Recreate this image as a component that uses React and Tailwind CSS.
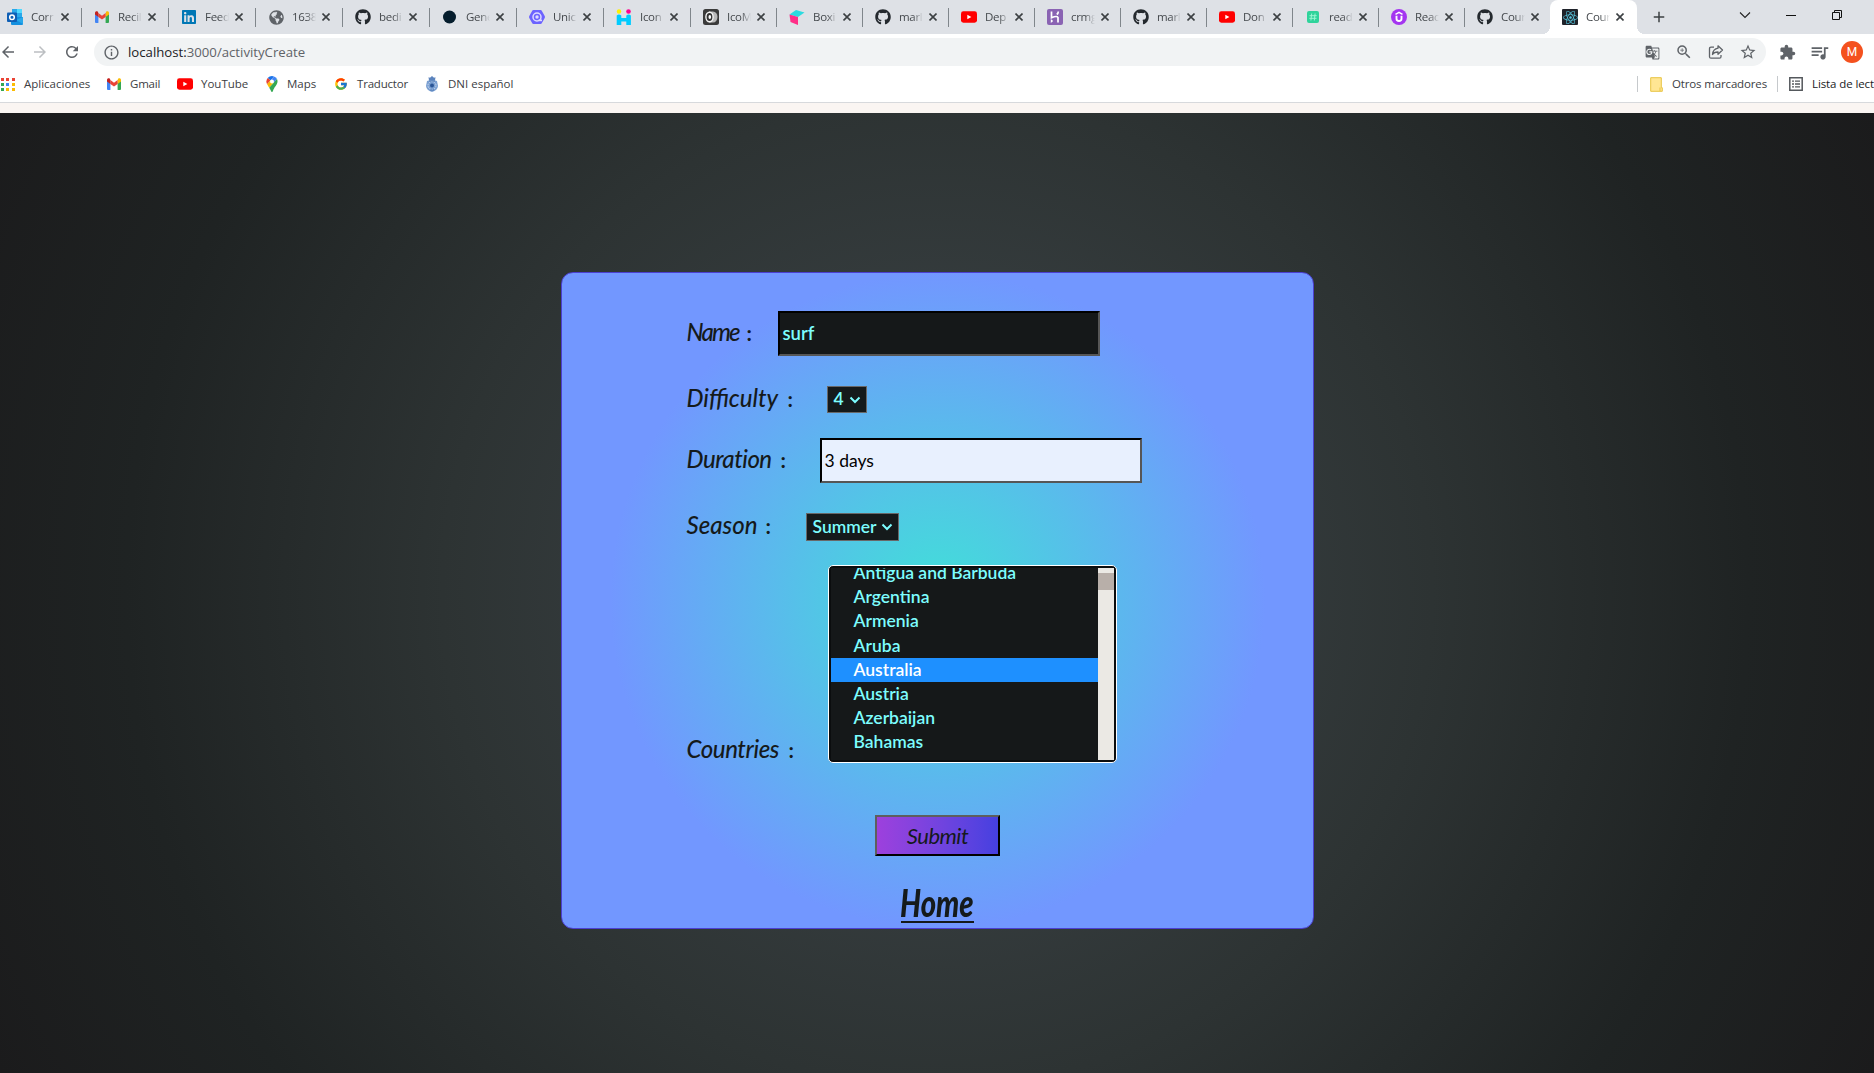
import React from "react";
import { FaGithub, FaLinkedin, FaGlobeAmericas, FaReact } from "react-icons/fa";
import { FcGoogle } from "react-icons/fc";
import {
  MdArrowBack,
  MdArrowForward,
  MdRefresh,
  MdInfoOutline,
  MdGTranslate,
  MdStarBorder,
  MdExtension,
  MdQueueMusic,
  MdAdd,
  MdZoomIn,
} from "react-icons/md";

const Outlook = () => (
  <svg viewBox="0 0 16 16" className="size-4">
    <path d="M5 0h10v9H5z" fill="#28a8ea" />
    <path d="M10 0h5v4h-5z" fill="#50d9ff" />
    <path d="M5 4h5v4H5z" fill="#0364b8" />
    <path d="M4 8h12v7a1 1 0 0 1-1 1H5a1 1 0 0 1-1-1z" fill="#1490df" />
    <path d="M16 8v7L9 11z" fill="#28a8ea" />
    <rect y="3.5" width="10" height="9.5" rx="1" fill="#0f5fb5" />
    <circle cx="5" cy="8.2" r="2.3" fill="none" stroke="#fff" strokeWidth="1.5" />
  </svg>
);

const Gmail = ({ className = "h-4 w-4" }) => (
  <svg viewBox="0 0 16 16" className={className}>
    <path d="M1 4v9a1 1 0 0 0 1 1h2.4V6.5z" fill="#4285f4" />
    <path d="M15 4v9a1 1 0 0 1-1 1h-2.4V6.5z" fill="#34a853" />
    <path d="M11.6 4v3.9L15 5.4V4c0-1.6-1.6-2.3-2.7-1.4z" fill="#fbbc04" />
    <path d="M4.4 7.9V4L8 6.700 11.6 4v3.9L8 10.6z" fill="#ea4335" />
    <path d="M1 4v1.4l3.4 2.5V4l-.7-1.4C2.6 1.7 1 2.4 1 4z" fill="#c5221f" />
  </svg>
);

const YouTube = ({ className = "size-4" }) => (
  <svg viewBox="0 0 16 16" className={className}>
    <rect y="2.3" width="16" height="11.4" rx="2.4" fill="#f00" />
    <path d="M6.3 5.7v4.6L10.4 8z" fill="#fff" />
  </svg>
);

const Dot = () => (
  <svg viewBox="0 0 16 16" className="size-4">
    <circle cx="7.5" cy="8" r="6.5" fill="#051d2d" />
  </svg>
);

const Unicons = () => (
  <svg viewBox="0 0 16 16" className="size-4">
    <path d="M4.500 1h7q1 0 1.400.9L15.700 7q.5 1 0 2l-2.800 5.100q-.4.900-1.400.9h-7q-1 0-1.400-.9L.3 9q-.5-1 0-2l2.800-5.100Q3.500 1 4.500 1z" fill="#6c63ff" />
    <circle cx="8" cy="8" r="4" fill="none" stroke="#dedcff" strokeWidth="1.5" />
    <circle cx="8" cy="8" r="1.7" fill="#dedcff" />
    <path d="M9.500 10.500h3.500v1.700H9.500z" fill="#dedcff" />
  </svg>
);

const Iconify = () => (
  <svg viewBox="0 0 16 16" className="size-4">
    <circle cx="3" cy="2.5" r="2.2" fill="#fff200" />
    <circle cx="12.5" cy="2.5" r="2.3" fill="#ff0090" />
    <path d="M.7 6.500q2.300-1.800 4.600 0V9h5V6.500q2.300-1.800 4.600 0V16h-4.600v-3.500h-5V16H.7z" fill="#0cf" />
  </svg>
);

const IcoMoon = () => (
  <svg viewBox="0 0 16 16" className="size-4">
    <rect width="16" height="16" rx="2.5" fill="#3b3b3b" />
    <path d="M6 2.500h4a4.500 5.500 0 0 1 0 11H6z" fill="#b9b9b9" />
    <ellipse cx="6.5" cy="8" rx="4.3" ry="5.5" fill="#f5f5f5" />
    <ellipse cx="6.5" cy="8" rx="2.9" ry="4" fill="#333" />
    <ellipse cx="6.8" cy="8" rx="1.3" ry="2" fill="#fff" />
  </svg>
);

const Boxicons = () => (
  <svg viewBox="0 0 16 16" className="size-4">
    <path d="M.5 5.500 7 1l8.500 2.500L9 8z" fill="#2bdbe0" />
    <path d="M.5 5.500 9 8v8l-7.500-3z" fill="#ff2e88" />
  </svg>
);

const Heroku = () => (
  <svg viewBox="0 0 16 16" className="size-4">
    <rect width="16" height="16" rx="2" fill="#8a63b3" />
    <path d="M4.500 2.500v6.300q5.500-2.400 6.500-.3v5M11.300 2.500q0 1.800-1.500 3" fill="none" stroke="#fff" strokeWidth="1.7" />
    <path d="m3.800 10 2.400 2-2.400 2z" fill="#fff" />
  </svg>
);

const Hash = () => (
  <svg viewBox="0 0 16 16" className="size-4">
    <rect x="2" y="2" width="12" height="12" rx="2" fill="#2fd39b" />
    <path d="M6.700 4.500 5.900 11.500M10.100 4.500l-.8 7M4.500 6.700h7.200M4.300 9.300h7.200" stroke="#9bf5d2" strokeWidth="1" />
  </svg>
);

const Udemy = () => (
  <svg viewBox="0 0 16 16" className="size-4">
    <circle cx="8" cy="8" r="8" fill="#a435f0" />
    <path d="M5.500 6.800v3q0 2.200 2.500 2.200t2.500-2.200v-3" fill="none" stroke="#fff" strokeWidth="1.900" />
    <path d="m4.500 5.400 3.500-2 3.500 2" fill="none" stroke="#fff" strokeWidth="1.500" />
  </svg>
);

const ReactIcon = () => (
  <span className="flex size-4 items-center justify-center rounded-[1px] bg-[#20232a]">
    <FaReact className="size-[15px] text-[#57c4dc]" />
  </span>
);

const GitHub = () => <FaGithub className="size-4 text-[#24292e]" />;
const LinkedIn = () => <FaLinkedin className="size-4 text-[#0077b5]" />;
const Globe = () => <FaGlobeAmericas className="size-[15px] text-[#5f6368]" />;

const MapsPin = () => (
  <svg viewBox="0 0 12 16" className="h-4 w-3">
    <path d="M6 0a5.600 5.600 0 0 0-4.300 2L4.500 4.400 8 .4A5.600 5.600 0 0 0 6 0z" fill="#1a73e8" />
    <path d="M1.700 2A5.600 5.600 0 0 0 1.100 8.200L4.500 4.400z" fill="#ea4335" />
    <path d="M8 .4 4.500 4.400 7.600 7 11 3A5.600 5.600 0 0 0 8 .4z" fill="#4285f4" />
    <path d="M1.100 8.200 4.500 4.400 7.600 7 3.200 11.700z" fill="#fbbc04" />
    <path d="M11 3 3.200 11.700C4.700 13.500 5 16 6 16c1.100 0 1-2.900 3.500-5.800C11.300 7.900 12.200 5.500 11 3z" fill="#34a853" />
    <circle cx="6" cy="5.6" r="2" fill="#fff" />
  </svg>
);

const Crest = () => (
  <svg viewBox="0 0 12 16" className="h-4 w-3">
    <path d="M2.500 1.200 4 1.800 6 0l2 1.800 1.500-.6L9 4.500H3z" fill="#5b83bd" />
    <path d="M1 5q5-2 10 0l1 5q-.5 4.500-6 6-5.500-1.500-6-6z" fill="#7ba0d2" />
    <circle cx="6" cy="9.5" r="4" fill="none" stroke="#dbe6f5" strokeWidth=".8" strokeDasharray="1.500 1" />
    <circle cx="6" cy="9.5" r="2" fill="#2b5596" />
    <path d="M3 5h6M4 14h4" stroke="#3f6cab" strokeWidth=".8" />
  </svg>
);

const CloseIcon = ({ className }) => (
  <svg viewBox="0 0 8 8" className={className}>
    <path d="M.5.5l7 7M7.500.5l-7 7" fill="none" stroke="#3c4043" strokeWidth="1.600" />
  </svg>
);

const appColors = [
  "bg-[#ea4335]", "bg-[#ea4335]", "bg-[#ea4335]",
  "bg-[#34a853]", "bg-[#4285f4]", "bg-[#fbbc04]",
  "bg-[#34a853]", "bg-[#fbbc04]", "bg-[#fbbc04]",
];

const AppsGrid = () => (
  <span className="grid w-[14px] grid-cols-3 gap-[2px]">
    {appColors.map((c, i) => (
      <span key={i} className={`size-[3px] ${c}`} />
    ))}
  </span>
);

const tabs = [
  [Outlook, "Corr"],
  [Gmail, "Recil"],
  [LinkedIn, "Feed"],
  [Globe, "1638"],
  [GitHub, "bedi"],
  [Dot, "Gene"],
  [Unicons, "Unic"],
  [Iconify, "Icon"],
  [IcoMoon, "IcoM"],
  [Boxicons, "Boxi"],
  [GitHub, "marl"],
  [YouTube, "Dep"],
  [Heroku, "crmg"],
  [GitHub, "marl"],
  [YouTube, "Don"],
  [Hash, "read"],
  [Udemy, "Reac"],
  [GitHub, "Cour"],
  [ReactIcon, "Cour"],
];

function Tab({ Icon, label, index }) {
  const active = index === tabs.length - 1;
  const separated = index < tabs.length - 2;
  return (
    <div
      className={`relative flex h-[34px] shrink-0 items-center pl-[12px] ${index < 8 ? "w-[87px]" : "w-[86px]"} ${
        active ? "-ml-px w-[87px] rounded-t-lg bg-white" : ""
      }`}
    >
      <span className="flex w-4 justify-center">
        <Icon />
      </span>
      <span className="ml-[8px] w-[30px] whitespace-nowrap text-[11.500px] tracking-[-0.300px] text-[#45494d] [mask-image:linear-gradient(to_right,black_14px,transparent_24px)]">
        {label}
      </span>
      <CloseIcon className="size-[8px]" />
      {separated && <span className="absolute right-0 top-[8px] h-[19px] w-px bg-[#80868b]" />}
      {active && (
        <>
          <span className="absolute -left-2 bottom-0 size-2 bg-[radial-gradient(circle_at_0_0,transparent_8px,white_8px)]" />
          <span className="absolute -right-2 bottom-0 size-2 bg-[radial-gradient(circle_at_100%_0,transparent_8px,white_8px)]" />
        </>
      )}
    </div>
  );
}

function TabStrip() {
  return (
    <div className="flex h-[34px] bg-[#dee1e6]">
      <div className="ml-[-5px] flex">
        {tabs.map(([Icon, label], i) => (
          <Tab key={i} Icon={Icon} label={label} index={i} />
        ))}
      </div>
      <MdAdd className="ml-[13px] mt-[8px] size-[18px] text-[#3c4043]" />
      <div className="ml-auto flex h-[29px] items-center pr-[32px]">
        <svg viewBox="0 0 12 8" className="w-3">
          <path d="m1 1.500 5 5 5-5" fill="none" stroke="#222" strokeWidth="1.100" />
        </svg>
        <svg viewBox="0 0 10 10" className="ml-[35px] w-2.5">
          <path d="M0 5.500h10" stroke="#111" />
        </svg>
        <svg viewBox="0 0 10 10" className="ml-[36px] w-2.5">
          <path d="M.5 2.500h7v7h-7zM2.500 2.500v-2h7v7h-2" fill="none" stroke="#111" />
        </svg>
      </div>
    </div>
  );
}

function Toolbar() {
  return (
    <div className="flex h-[36px] items-center bg-white text-[#5f6368]">
      <MdArrowBack className="-ml-px size-[18px]" />
      <MdArrowForward className="ml-[14px] size-[18px] text-[#bcbfc2]" />
      <MdRefresh className="ml-[14px] size-[18px]" />
      <div className="ml-[13px] flex h-[28px] w-[1672px] items-center rounded-full bg-[#f1f3f4] pl-[9px] pr-[9px]">
        <MdInfoOutline className="size-[17px]" />
        <span className="ml-[8px] pt-px text-[13.200px] text-[#5f6368]">
          <span className="text-[#202124]">localhost:</span>3000/activityCreate
        </span>
        <div className="ml-auto flex items-center">
          <MdGTranslate className="size-[15px]" />
          <MdZoomIn className="ml-[15px] size-[18px]" />
          <svg viewBox="0 0 16 16" className="ml-[15px] size-4" fill="none" stroke="#5f6368" strokeWidth="1.3">
            <path d="M6 3.200H3q-1.500 0-1.500 1.500v8q0 1.500 1.500 1.500h8.500q1.500 0 1.500-1.500V11" />
            <path d="M10 1.800 14.500 6 10 10.200V8q-4 0-5.500 2.500Q5 5 10 4.200z" strokeLinejoin="round" />
          </svg>
          <MdStarBorder className="ml-[15px] size-[18px]" />
        </div>
      </div>
      <MdExtension className="ml-[13px] size-[17px]" />
      <MdQueueMusic className="ml-[13px] size-[21px]" />
      <span className="ml-[11px] flex size-[22px] items-center justify-center rounded-full bg-[#f4511e] font-[Roboto] text-[12px] text-white">
        M
      </span>
    </div>
  );
}

function BookmarksBar() {
  return (
    <div className="flex h-[37px] items-center overflow-hidden whitespace-nowrap border-b border-[#d7d9dc] bg-white text-[11.500px] text-[#3c4043]">
      <div className="ml-px flex w-[105px] items-center">
        <AppsGrid />
        <span className="ml-[9px]">Aplicaciones</span>
      </div>
      <div className="flex w-[71px] items-center">
        <Gmail className="h-4 w-4" />
        <span className="ml-[8px] tracking-[-0.200px]">Gmail</span>
      </div>
      <div className="flex w-[89px] items-center">
        <YouTube />
        <span className="ml-[8px]">YouTube</span>
      </div>
      <div className="flex w-[68px] items-center">
        <MapsPin />
        <span className="ml-[9px]">Maps</span>
      </div>
      <div className="flex w-[92px] items-center">
        <FcGoogle className="size-[14px]" />
        <span className="ml-[9px] tracking-[-0.200px]">Traductor</span>
      </div>
      <div className="flex items-center">
        <Crest />
        <span className="ml-[10px]">DNI español</span>
      </div>
      <div className="ml-auto flex w-[237px] shrink-0 items-center">
        <span className="h-4 w-px shrink-0 bg-[#c6c9cc]" />
        <svg viewBox="0 0 13 15" className="ml-[12px] w-[13px] shrink-0">
          <path d="M.7.7h10.600v10h1v3.600H.7z" fill="#ffe694" stroke="#e8c443" />
          <path d="M10 10.500v3.500" stroke="#e8c443" />
        </svg>
        <span className="ml-[9px] w-[105px] shrink-0 tracking-[-0.150px]">Otros marcadores</span>
        <span className="h-4 w-px shrink-0 bg-[#c6c9cc]" />
        <svg viewBox="0 0 14 14" className="ml-[11px] w-[14px] shrink-0">
          <path d="M.8.8h12.400v12.400H.8z" fill="none" stroke="#54585c" strokeWidth="1.5" />
          <path d="M3 4.200h2M3 7h2M3 9.800h2M6 4.200h5M6 7h5M6 9.800h5" stroke="#54585c" strokeWidth="1.3" />
        </svg>
        <span className="ml-[9px] tracking-[-0.100px] text-[#202124]">Lista de lect</span>
      </div>
    </div>
  );
}

function Label({ wordWidth, width, tracking = "", lift = "-mt-[3px]", children }) {
  return (
    <span
      className={`flex shrink-0 pl-px font-[Lato] text-[24px] font-medium italic leading-[28px] text-[#151a1b] ${lift} ${width}`}
    >
      <span className={`${wordWidth} ${tracking}`}>{children}</span>
      <span className="pt-px text-[21px] font-bold not-italic">:</span>
    </span>
  );
}

function Dropdown({ value, size }) {
  return (
    <span
      className={`flex items-center justify-between border border-[#686868] bg-[#151a1b] pl-[6px] pr-[5px] font-[Lato] text-[17.500px] font-semibold text-[#7dfdfe] ${size}`}
    >
      {value}
      <svg viewBox="0 0 12 8" className="w-3 shrink-0">
        <path d="m1.500 1.500 4.500 4.500 4.500-4.500" fill="none" stroke="#7dfdfe" strokeWidth="2" />
      </svg>
    </span>
  );
}

const countries = [
  "Antigua and Barbuda",
  "Argentina",
  "Armenia",
  "Aruba",
  "Australia",
  "Austria",
  "Azerbaijan",
  "Bahamas",
  "Bahrain",
];

function CountryList() {
  return (
    <div className="flex h-[198px] w-[289px] overflow-hidden rounded-[5px] border border-white bg-[#0b0d0e] p-[2px]">
      <div className="h-[192px] flex-1 overflow-hidden bg-[#151819]">
        <ul className="-mt-[7px] font-[Lato] text-[17.500px] font-semibold text-[#7dfdfe]">
          {countries.map((c) => (
            <li
              key={c}
              className={`h-[24.200px] pl-[23px] leading-[24px] ${c === "Australia" ? "bg-[#1e90ff] text-white" : ""}`}
            >
              {c}
            </li>
          ))}
        </ul>
      </div>
      <div className="h-[192px] w-[16px] bg-[#ebe9e4] pt-[5px]">
        <div className="h-[17px] bg-[#b8afa9]" />
      </div>
    </div>
  );
}

function ActivityForm() {
  return (
    <div className="h-[657px] w-[753px] rounded-[12px] border border-[#4b3fd0] bg-[radial-gradient(circle_closest-side,#40e0d8,#7297ff)] pl-[124px] pt-[38px]">
      <div className="flex h-[45px] items-center">
        <Label width="w-[92px]" wordWidth="w-[60px]" tracking="tracking-[-1.800px]">Name</Label>
        <div className="flex h-[45px] w-[322px] items-center border-2 border-b-[#565656] border-l-black border-r-[#565656] border-t-black bg-[#151819] pl-[3px] font-[Lato] text-[18.500px] font-semibold text-[#7dfdfe]">
          surf
        </div>
      </div>
      <div className="mt-[30px] flex h-[27px] items-center">
        <Label width="w-[141px]" wordWidth="w-[101px]">Difficulty</Label>
        <Dropdown value="4" size="h-[27px] w-[40px]" />
      </div>
      <div className="mt-[25px] flex h-[45px] items-center">
        <Label width="w-[134px]" wordWidth="w-[94px]" tracking="tracking-[-0.500px]">Duration</Label>
        <div className="flex h-[45px] w-[322px] items-center border-2 border-b-[#565656] border-l-black border-r-[#565656] border-t-black bg-[#e8f0fe] pl-[3px] pt-px font-[Lato] text-[17.500px] text-black">
          3 days
        </div>
      </div>
      <div className="mt-[30px] flex h-[28px] items-center">
        <Label width="w-[120px]" wordWidth="w-[79px]">Season</Label>
        <Dropdown value="Summer" size="h-[28px] w-[93px]" />
      </div>
      <div className="mt-[24px] flex h-[198px] items-end">
        <Label width="w-[142px]" wordWidth="w-[102px]" tracking="tracking-[-0.400px]" lift="-mb-px">Countries</Label>
        <CountryList />
      </div>
      <div className="-ml-[124px] mt-[52px] flex flex-col items-center">
        <div className="flex h-[41px] w-[125px] items-center justify-center border-2 border-b-black border-l-[#5e5e5e] border-r-black border-t-[#5e5e5e] bg-linear-to-r from-[#9d40dd] to-[#4540e0] pl-px font-[Lato] text-[22px] italic tracking-[-0.500px] text-[#151a1b]">
          Submit
        </div>
        <div className="mt-[27px] flex w-[73px] justify-center border-b-2 border-[#151a1b] font-[Lato] text-[38px] font-black italic leading-[38px] text-[#151a1b]">
          <span className="scale-x-[0.770]">Home</span>
        </div>
      </div>
    </div>
  );
}

export default function App() {
  return (
    <div className="h-[1073px] w-[1874px] overflow-hidden font-['Open_Sans',sans-serif]">
      <TabStrip />
      <Toolbar />
      <div className="-mt-[4px]">
        <BookmarksBar />
      </div>
      <div className="h-[10px] bg-[#faf5f2]" />
      <main className="flex h-[960px] justify-center bg-[radial-gradient(circle,#3f474b_0%,#2d3333_47%,#1f2323_77%,#1b1b1c_100%)] pt-[159px]">
        <ActivityForm />
      </main>
    </div>
  );
}
